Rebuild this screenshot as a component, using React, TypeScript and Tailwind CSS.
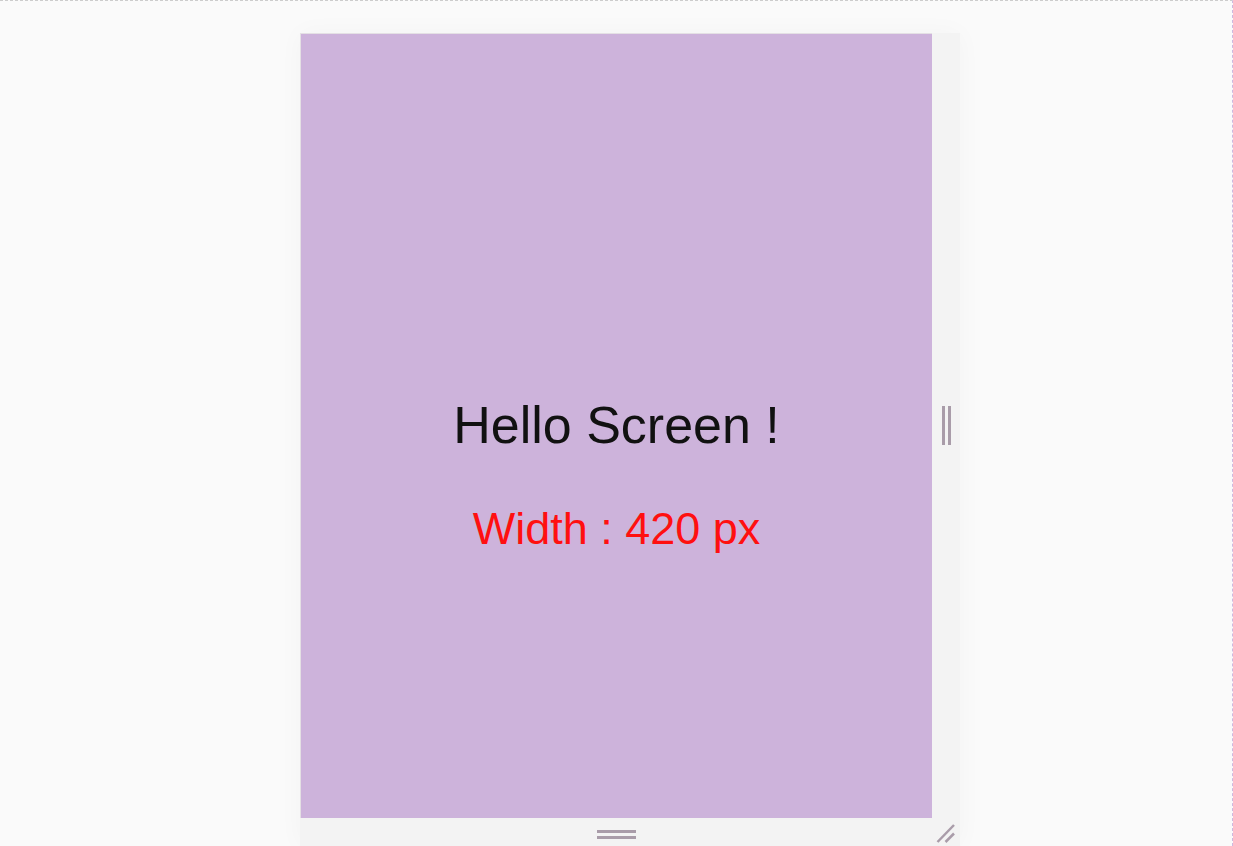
export default function App() {
  return (
    <div className="h-[846px] w-[1233px] overflow-hidden border-t border-r border-dashed border-t-[#cccccc] border-r-[#cdb8e0] bg-[#fafafa] font-['Liberation_Sans',Arial,sans-serif]">
      <div className="ml-[300px] mt-[32px] grid w-[660px] grid-cols-[632px_28px] grid-rows-[785px_28px] bg-[#f3f3f3] shadow-[0_0_24px_rgba(0,0,0,0.03)]">
        <div className="flex flex-col items-center justify-center border-t border-l border-[#e4e0e4] bg-[#cdb3db] pt-[97px]">
          <h1 className="text-[52px] leading-none text-[#111]">Hello Screen !</h1>
          <p className="mt-[55px] text-[45px] leading-none text-[#ff1010]">Width : 420 px</p>
        </div>
        <div className="flex items-center justify-center gap-[3px] pl-[1px]">
          <span className="h-[39px] w-[3px] bg-[#a99ca9]" />
          <span className="h-[39px] w-[3px] bg-[#a99ca9]" />
        </div>
        <div className="flex flex-col items-center gap-[3px] pt-[12px]">
          <span className="h-[3px] w-[39px] bg-[#a99ca9]" />
          <span className="h-[3px] w-[39px] bg-[#a99ca9]" />
        </div>
        <div className="relative">
          <svg width="28" height="28" viewBox="0 0 28 28" className="absolute left-0 top-0">
            <line x1="5.5" y1="24" x2="22" y2="7" stroke="#a99ca9" strokeWidth="2.5" />
            <line x1="13.5" y1="24" x2="22" y2="15.5" stroke="#a99ca9" strokeWidth="2.5" />
          </svg>
        </div>
      </div>
    </div>
  );
}
